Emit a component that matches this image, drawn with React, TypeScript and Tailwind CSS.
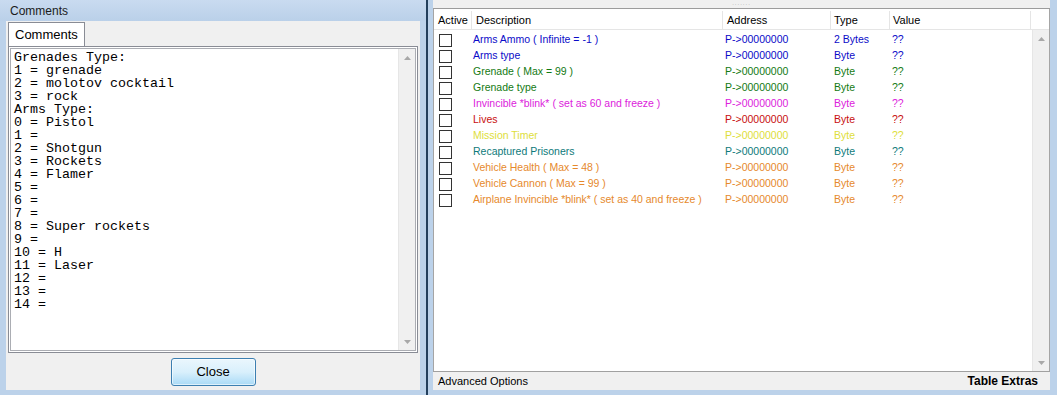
import React from "react";

const comments = [
  "Grenades Type:",
  "1 = grenade",
  "2 = molotov cocktail",
  "3 = rock",
  "Arms Type:",
  "0 = Pistol",
  "1 =",
  "2 = Shotgun",
  "3 = Rockets",
  "4 = Flamer",
  "5 =",
  "6 =",
  "7 =",
  "8 = Super rockets",
  "9 =",
  "10 = H",
  "11 = Laser",
  "12 =",
  "13 =",
  "14 =",
];

type Entry = { desc: string; type: string; color: string };

const entries: Entry[] = [
  { desc: "Arms Ammo ( Infinite = -1 )", type: "2 Bytes", color: "text-[#0b0bc8]" },
  { desc: "Arms type", type: "Byte", color: "text-[#0b0bc8]" },
  { desc: "Grenade ( Max = 99 )", type: "Byte", color: "text-[#137a13]" },
  { desc: "Grenade type", type: "Byte", color: "text-[#137a13]" },
  { desc: "Invincible *blink* ( set as 60 and freeze )", type: "Byte", color: "text-[#dc22dc]" },
  { desc: "Lives", type: "Byte", color: "text-[#c80f0f]" },
  { desc: "Mission Timer", type: "Byte", color: "text-[#dede3a]" },
  { desc: "Recaptured Prisoners", type: "Byte", color: "text-[#0e7a7a]" },
  { desc: "Vehicle Health ( Max = 48 )", type: "Byte", color: "text-[#e6892c]" },
  { desc: "Vehicle Cannon ( Max = 99 )", type: "Byte", color: "text-[#e6892c]" },
  { desc: "Airplane Invincible *blink* ( set as 40 and freeze )", type: "Byte", color: "text-[#e6892c]" },
];

function Arrow({ down }: { down?: boolean }) {
  return (
    <svg width="7" height="4" viewBox="0 0 7 4">
      <path d={down ? "M0 0h7L3.5 4z" : "M0 4h7L3.5 0z"} fill="#a8a8a8" />
    </svg>
  );
}

function ScrollBar() {
  return (
    <div className="flex w-[17px] flex-col justify-between border-l border-[#e6e6e6] bg-[#f0f0f0]">
      <div className="flex h-[17px] items-center justify-center">
        <Arrow />
      </div>
      <div className="flex h-[17px] items-center justify-center">
        <Arrow down />
      </div>
    </div>
  );
}

export default function App() {
  return (
    <div className="flex h-[395px] w-[1057px] bg-[#bcd2ea] font-['Liberation_Sans',Arial,sans-serif] text-black">
      {/* comments window */}
      <div className="flex w-[426px] flex-col">
        <div className="flex h-[21px] items-center bg-gradient-to-b from-[#c9dbf0] to-[#bad0e9] pl-[10px] text-[12px] text-[#1b1b1b]">
          Comments
        </div>
        <div className="mx-[6px] mb-[5px] flex flex-1 flex-col bg-[#f0f0f0]">
          <div className="flex pl-[2px] pt-[1px]">
            <div className="flex h-[24px] items-center border border-b-0 border-[#898c95] bg-white px-[6px] text-[13px]">
              Comments
            </div>
          </div>
          <div className="mx-[2px] flex h-[307px] border border-[#898c95] bg-white p-[1px]">
            <div className="flex flex-1 border border-[#abadb3]">
              <div className="flex-1 pl-[3px] pt-[2px] font-['Liberation_Mono','Courier_New',monospace] text-[13.33px] leading-[13px]">
                {comments.map((c, i) => (
                  <div key={i} className="whitespace-pre">
                    {c}
                  </div>
                ))}
              </div>
              <ScrollBar />
            </div>
          </div>
          <div className="flex flex-1 items-center justify-center">
            <button className="h-[28px] w-[85px] rounded-[3px] border border-[#3c7fb1] bg-gradient-to-b from-[#eaf6fd] via-[#d9f0fc] to-[#a9daf6] text-[13px] shadow-[inset_0_0_0_1px_rgba(255,255,255,0.6)]">
              Close
            </button>
          </div>
        </div>
      </div>

      {/* divider */}
      <div className="w-[2px] bg-[#233f5c]" />

      {/* cheat table window */}
      <div className="flex flex-1 flex-col pb-[5px] pl-[5px] pr-[7px]">
        <div className="flex flex-1 flex-col bg-[#f0f0f0]">
          <div className="flex h-[9px] items-start justify-center border-b border-[#9c9c9c] text-[6px] leading-[6px] tracking-[1px] text-[#a0a0a0]">
            .......
          </div>
          <div className="flex flex-1 flex-col border-x border-[#a5a5a5] bg-white text-[10.5px]">
            <div className="grid h-[21px] grid-cols-[38px_251px_108px_59px_141px_17px] border-b border-[#e5e5e5] pt-[2px] text-[11px]">
              <div className="flex items-center border-r border-[#e5e5e5] pl-[4px]">Active</div>
              <div className="flex items-center border-r border-[#e5e5e5] pl-[4px]">Description</div>
              <div className="flex items-center border-r border-[#e5e5e5] pl-[4px]">Address</div>
              <div className="flex items-center border-r border-[#e5e5e5] pl-[3px]">Type</div>
              <div className="flex items-center border-r border-[#e5e5e5] pl-[3px]">Value</div>
              <div />
            </div>
            <div className="flex flex-1">
              <div className="flex-1 pt-[2px]">
                {entries.map((e, i) => (
                  <div key={i} className={`grid h-[16px] grid-cols-[38px_251px_108px_59px_141px] items-center ${e.color}`}>
                    <div className="pl-[5px]">
                      <div className="h-[13px] w-[13px] border border-[#333] bg-white" />
                    </div>
                    <div className="whitespace-nowrap pl-[1px]">{e.desc}</div>
                    <div className="pl-[2px]">P-&gt;00000000</div>
                    <div className="pl-[3px]">{e.type}</div>
                    <div className="pl-[2px]">??</div>
                  </div>
                ))}
              </div>
              <ScrollBar />
            </div>
          </div>
          <div className="flex h-[19px] items-center justify-between border-t border-[#a0a0a0] pl-[5px] pr-[12px] text-[11px]">
            <span>Advanced Options</span>
            <span className="text-[12px] font-bold">Table Extras</span>
          </div>
        </div>
      </div>
    </div>
  );
}
